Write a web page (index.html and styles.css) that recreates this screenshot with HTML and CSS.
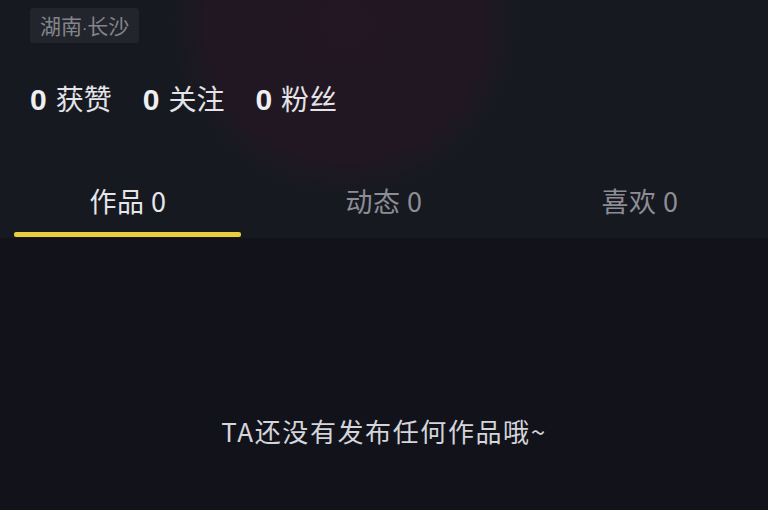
FILE: index.html
```html
<!DOCTYPE html>
<html lang="zh-CN">
<head>
  <meta charset="UTF-8">
  <title>个人主页</title>
  <meta name="viewport" content="width=device-width, initial-scale=1.0">
  <link rel="stylesheet" href="styles.css">
</head>
<body>

<div class="page">
  <div class="header">
    <span class="location">湖南<i>·</i>长沙</span>

    <div class="stats">
      <span class="stat"><b>0</b>获赞</span>
      <span class="stat"><b>0</b>关注</span>
      <span class="stat"><b>0</b>粉丝</span>
    </div>

    <div class="tabs">
      <div class="tab active">作品 0</div>
      <div class="tab">动态 0</div>
      <div class="tab">喜欢 0</div>
    </div>
  </div>

  <div class="content">
    <p class="empty">TA还没有发布任何作品哦~</p>
  </div>
</div>

</body>
</html>
```

FILE: styles.css
```css
body {
  margin: 0;
  background: #12131a;
  font-family: "Noto Sans CJK SC", "Noto Sans", sans-serif;
}

.page {
  width: 768px;
  height: 510px;
  overflow: hidden;
  display: flex;
  flex-direction: column;
}

.header {
  height: 238px;
  padding-top: 8px;
  box-sizing: border-box;
  background:
    radial-gradient(circle 172px at 345px 22px, #221722 0, #211722 78%, rgba(23, 25, 33, 0) 100%),
    #171921;
}

.location {
  display: inline-block;
  margin-left: 30px;
  height: 35px;
  line-height: 35px;
  padding: 0 10px;
  font-size: 21px;
  color: #83858c;
  background: #23252d;
  border-radius: 3px;
}

.location i {
  font-style: normal;
  font-family: "Liberation Sans", Arial, sans-serif;
  font-size: 16px;
}

.stats {
  display: flex;
  margin-top: 35px;
  padding-left: 30px;
  gap: 31px;
  line-height: 40px;
  height: 40px;
}

.stat {
  font-size: 28px;
  color: #e4e4e8;
}

.stat b {
  font-family: "Liberation Sans", Arial, sans-serif;
  font-size: 30px;
  font-weight: bold;
  color: #efeff2;
  margin-right: 9px;
}

.tabs {
  display: flex;
  margin-top: 64px;
}

.tab {
  flex: 1;
  text-align: center;
  font-size: 27px;
  line-height: 38px;
  letter-spacing: 0.5px;
  color: #8c8d95;
}

.tab.active {
  color: #e6e6ea;
}

.tab.active::after {
  content: "";
  display: block;
  height: 5px;
  margin: 12px 15px 0 14px;
  background: #eccd3c;
  border-radius: 2px;
}

.content {
  flex: 1;
  background: #12131a;
}

.empty {
  margin: 0;
  padding-top: 175px;
  text-align: center;
  font-size: 26px;
  line-height: 36px;
  letter-spacing: 1.6px;
  color: #d4d5da;
}
```
